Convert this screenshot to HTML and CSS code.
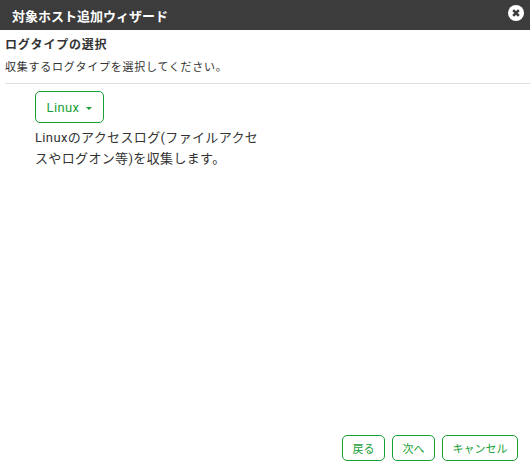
FILE: index.html
```html
<!DOCTYPE html>
<html lang="ja">
<head>
    <meta charset="UTF-8">
    <title>対象ホスト追加ウィザード</title>
    <link rel="stylesheet" href="styles.css">
</head>
<body>
    <div class="dialog">
        <div class="dialog-header">
            <h1 class="dialog-title">対象ホスト追加ウィザード</h1>
            <button class="close-button" aria-label="閉じる">
                <svg viewBox="0 0 16 16" width="16" height="16">
                    <circle cx="8" cy="8" r="8" fill="#fff"/>
                    <path d="M5.2 5.2 L10.8 10.8 M10.8 5.2 L5.2 10.8" stroke="#3c3c3c" stroke-width="2.6"/>
                </svg>
            </button>
        </div>
        <div class="dialog-body">
            <h2 class="section-title">ログタイプの選択</h2>
            <p class="section-lead">収集するログタイプを選択してください。</p>
            <hr class="divider">
            <div class="log-type">
                <button class="btn btn-select">Linux<span class="caret"></span></button>
                <p class="log-desc">Linuxのアクセスログ(ファイルアクセスやログオン等)を収集します。</p>
            </div>
        </div>
        <div class="dialog-footer">
            <button class="btn btn-small">戻る</button>
            <button class="btn btn-small">次へ</button>
            <button class="btn btn-small">キャンセル</button>
        </div>
    </div>
</body>
</html>
```

FILE: styles.css
```css
html, body {
    height: 100%;
}

body {
    margin: 0;
    background: #fff;
    color: #333;
    font-family: Roboto, "Noto Sans CJK JP", sans-serif;
    overflow: hidden;
}

.dialog {
    height: 100%;
    display: flex;
    flex-direction: column;
}

.dialog-header {
    flex: none;
    height: 30px;
    background: #3c3c3c;
    display: flex;
    align-items: center;
    justify-content: space-between;
    padding: 0 6px 0 12px;
}

.dialog-title {
    margin: 0;
    font-size: 13px;
    font-weight: bold;
    color: #fff;
}

.close-button {
    padding: 0;
    border: none;
    background: none;
    display: flex;
    margin-bottom: 4px;
}

.dialog-body {
    flex: 1;
    padding: 7px 0 0 5px;
}

.section-title {
    margin: 0;
    font-size: 12px;
    line-height: 16px;
    font-weight: bold;
    letter-spacing: 0.8px;
}

.section-lead {
    margin: 7px 0 0;
    font-size: 11px;
    line-height: 16px;
    letter-spacing: 0.75px;
}

.divider {
    margin: 7px 0 0;
    border: none;
    border-top: 1px solid #e0e0e0;
}

.log-type {
    width: 225px;
    margin: 7px 0 0 30px;
}

.btn {
    border: 1px solid #18a037;
    border-radius: 5px;
    background: #fff;
    color: #18a037;
    font-family: inherit;
}

.btn-select {
    display: block;
    height: 32px;
    width: 69px;
    padding: 0;
    font-size: 13px;
    letter-spacing: 0.4px;
}

.caret {
    display: inline-block;
    margin-left: 7px;
    vertical-align: middle;
    border-top: 3px solid #18a037;
    border-left: 3px solid transparent;
    border-right: 3px solid transparent;
}

.log-desc {
    margin: 4px 0 0;
    font-size: 13px;
    line-height: 21px;
    letter-spacing: 0.35px;
}

.dialog-footer {
    flex: none;
    display: flex;
    justify-content: flex-end;
    gap: 7px;
    padding: 0 12px 4px 0;
}

.btn-small {
    height: 26px;
    padding: 0 9.5px;
    font-size: 11px;
}
```
